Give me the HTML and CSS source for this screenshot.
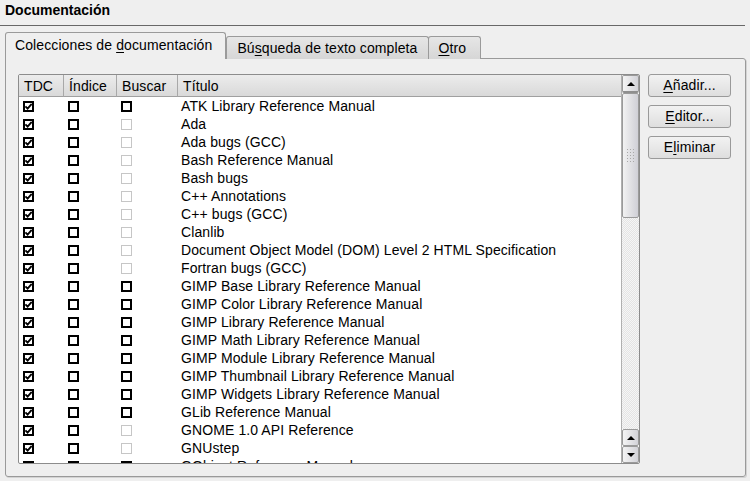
FILE: index.html
```html
<!DOCTYPE html>
<html>
<head>
<meta charset="utf-8">
<link rel="stylesheet" href="styles.css">
</head>
<body>
<div class="title">Documentación</div>
<div class="rule"></div>
<div class="tabs">
  <div class="tab active">Colecciones de <u>d</u>ocumentación</div>
  <div class="tab t2">Bú<u>s</u>queda de texto completa</div>
  <div class="tab t3"><u>O</u>tro</div>
</div>
<div class="panel">
  <div class="list">
    <div class="table">
      <div class="row head">
        <div class="hc">TDC</div><div class="hc">Índice</div><div class="hc">Buscar</div><div class="hc last">Título</div>
      </div>
      <div class="rows" id="rows"></div>
    </div>
    <div class="scroll">
      <div class="sbtn up"><span class="tri-up"></span></div>
      <div class="thumb"><div class="grip"></div></div>
      <div class="track"></div>
      <div class="sbtn up2"><span class="tri-up"></span></div>
      <div class="sbtn down"><span class="tri-down"></span></div>
    </div>
  </div>
  <div class="buttons">
    <div class="btn"><u>A</u>ñadir...</div>
    <div class="btn"><u>E</u>ditor...</div>
    <div class="btn">E<u>l</u>iminar</div>
  </div>
</div>
<script src="app.js"></script>
</body>
</html>
```
FILE: app.js
```js
var data = [
 ["ATK Library Reference Manual",1],
 ["Ada",0],["Ada bugs (GCC)",0],["Bash Reference Manual",0],["Bash bugs",0],
 ["C++ Annotations",0],["C++ bugs (GCC)",0],["Clanlib",0],
 ["Document Object Model (DOM) Level 2 HTML Specification",0],["Fortran bugs (GCC)",0],
 ["GIMP Base Library Reference Manual",1],["GIMP Color Library Reference Manual",1],
 ["GIMP Library Reference Manual",1],["GIMP Math Library Reference Manual",1],
 ["GIMP Module Library Reference Manual",1],["GIMP Thumbnail Library Reference Manual",1],
 ["GIMP Widgets Library Reference Manual",1],["GLib Reference Manual",1],
 ["GNOME 1.0 API Reference",0],["GNUstep",0],["GObject Reference Manual",1]
];
var check = '<svg width="7" height="7" viewBox="0 0 7 7"><path d="M0.4 3.3 L2.6 5.6 L6.7 0.9" fill="none" stroke="#000" stroke-width="1.8"/></svg>';
var html = "";
data.forEach(function(d){
  html += '<div class="row"><div class="c"><span class="cb on">'+check+'</span></div>' +
    '<div class="c"><span class="cb"></span></div>' +
    '<div class="c"><span class="cb'+(d[1]?'':' dis')+'"></span></div>' +
    '<div class="c t">'+d[0]+'</div></div>';
});
document.getElementById("rows").innerHTML = html;
```
FILE: styles.css
```css
html, body { margin: 0; padding: 0; }
body {
  width: 750px; height: 481px; overflow: hidden;
  background: #efefef;
  font-family: "Liberation Sans", Arial, sans-serif;
  font-size: 14px; color: #000; letter-spacing: 0.1px;
}
.title { font-weight: bold; padding: 2px 0 0 5px; height: 25px; line-height: 17px; box-sizing: border-box; letter-spacing: 0; }
.rule { height: 0; border-top: 1px solid #686868; width: 745px; }
.tabs { display: flex; align-items: flex-end; margin: 7px 0 0 5px; height: 26px; position: relative; z-index: 2; }
.tab {
  height: 22px; line-height: 22px; padding: 0 11px 0 10px;
  border: 1px solid #9a9a9a; border-bottom: none; border-radius: 3px 3px 0 0;
  background: linear-gradient(#e6e6e6, #d6d6d6);
}
.tab.t3 { padding: 0 14px 0 9px; margin-left: -1px; }
.tab.active {
  height: 26px; line-height: 25px; background: #efefef; padding: 0 13px 0 9px;
}
.panel {
  margin: 0 5px; width: 741px; height: 419px;
  border: 1px solid #9a9a9a; border-radius: 0 3px 3px 3px;
  box-shadow: 1px 1px 0 #d4d4d4;
  display: flex; padding: 15px 0 0 12px; box-sizing: border-box;
  position: relative; top: -1px; z-index: 1;
}
.list {
  width: 622px; height: 390px; box-sizing: border-box;
  border: 1px solid #8c8c8c; border-radius: 2px;
  background: #fff; display: flex; overflow: hidden;
}
.table { flex: 1; overflow: hidden; }
.row { display: grid; grid-template-columns: 45px 53px 61px 1fr; height: 18px; }
.row.head { height: 22px; }
.hc {
  height: 22px; line-height: 22px; padding-left: 5px; box-sizing: border-box;
  background: linear-gradient(#ececec, #d9d9d9);
  border-right: 1px solid #a8a8a8; border-bottom: 1px solid #a0a0a0;
}
.hc.last { border-right: none; }
.c { display: flex; align-items: center; padding-left: 4px; height: 18px; }
.c.t { padding-left: 3px; line-height: 18px; white-space: nowrap; }
.cb {
  width: 11px; height: 11px; box-sizing: border-box;
  border: 2px solid #000; background: #fff;
  display: flex; align-items: center; justify-content: center;
}
.cb svg { display: block; }
.cb.dis { border: 1px solid #c6c6c6; }
.scroll { width: 18px; display: flex; flex-direction: column; border-left: 1px solid #b0b0b0; box-sizing: border-box; }
.sbtn {
  height: 17px; box-sizing: border-box; flex: none;
  border: 1px solid #9a9a9a; border-radius: 2px;
  background: linear-gradient(90deg, #f4f4f4, #d2d2d8);
  display: flex; align-items: center; justify-content: center;
}
.up { border-bottom: 2px solid #8f8f8f; height: 18px; }
.tri-up { width: 0; height: 0; border-left: 4px solid transparent; border-right: 4px solid transparent; border-bottom: 4px solid #000; }
.tri-down { width: 0; height: 0; border-left: 4px solid transparent; border-right: 4px solid transparent; border-top: 4px solid #000; }
.thumb {
  height: 125px; flex: none; box-sizing: border-box;
  border: 1px solid #9a9a9a; border-radius: 2px;
  background: linear-gradient(90deg, #f2f2f2, #cfcfd6);
  display: flex; align-items: center; justify-content: center;
}
.grip {
  width: 9px; height: 16px;
  background-image: radial-gradient(circle, #a8a8a8 0.8px, transparent 0.9px);
  background-size: 3px 3px;
}
.track {
  flex: 1;
  background-color: #f6f6f6;
  background-image: linear-gradient(45deg, #e4e4e4 25%, transparent 25%, transparent 75%, #e4e4e4 75%),
                    linear-gradient(45deg, #e4e4e4 25%, transparent 25%, transparent 75%, #e4e4e4 75%);
  background-size: 2px 2px; background-position: 0 0, 1px 1px;
}
.up2 { border-bottom: 1px solid #9a9a9a; }
.down { height: 17px; }
.buttons { display: flex; flex-direction: column; gap: 8px; margin-left: 8px; }
.btn {
  width: 83px; height: 23px; box-sizing: border-box;
  border: 1px solid #9a9a9a; border-radius: 3px;
  background: linear-gradient(#f2f2f2, #dedede);
  text-align: center; line-height: 21px;
}
u { text-decoration: underline; text-underline-offset: 2px; }
```
